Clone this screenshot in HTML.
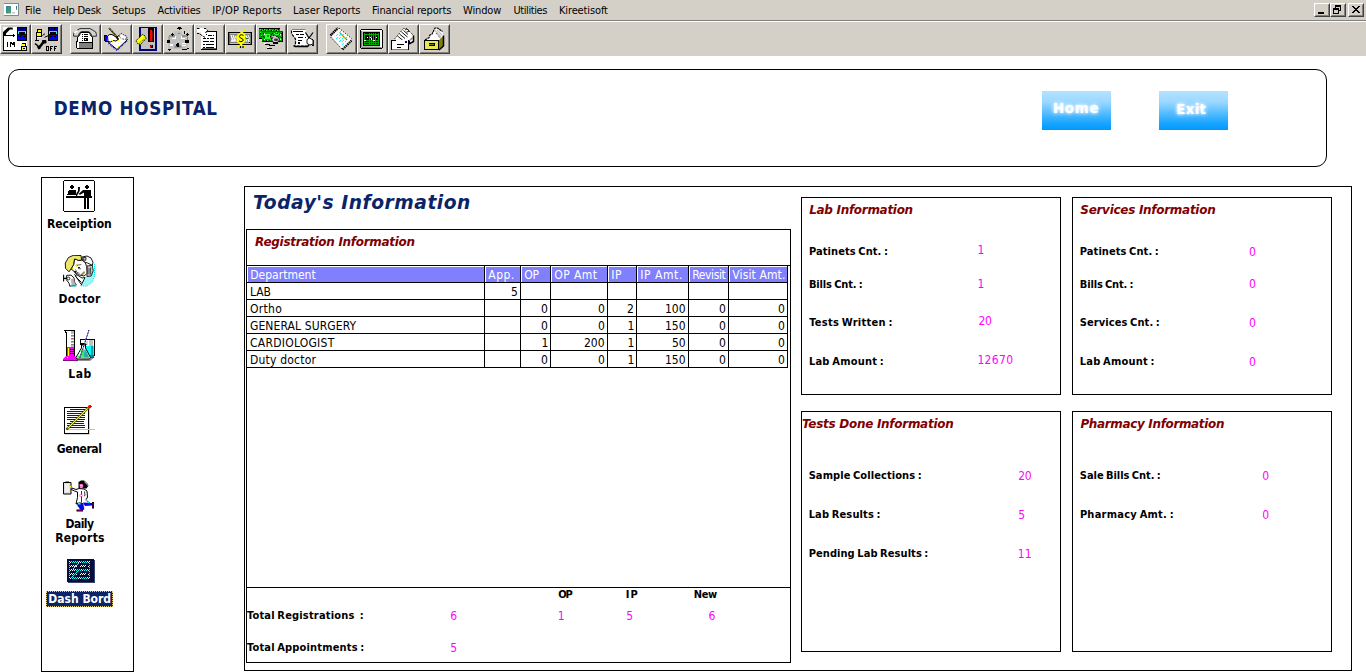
<!DOCTYPE html>
<html lang="en"><head><meta charset="utf-8"><title>DEMO HOSPITAL - Dash Bord</title>
<style>
html,body{margin:0;padding:0;background:#fff;overflow:hidden}
body{width:1366px;height:672px;position:relative;font-family:"DejaVu Sans Condensed","Liberation Sans",sans-serif;font-size:11px}
div,span,svg{position:absolute;box-sizing:border-box}
.t{white-space:pre;line-height:normal}
.bx{border:1px solid #000}
.tb{top:24px;width:31px;height:30px;background:#d4d0c8;border:1px solid;border-color:#fff #404040 #404040 #fff}
.tb:after{content:"";position:absolute;left:0;top:0;right:0;bottom:0;border:1px solid;border-color:#d4d0c8 #808080 #808080 #d4d0c8}
.tb svg{left:2px;top:2px;width:24px;height:24px;z-index:1}
.wb{top:3px;width:16px;height:14px;background:#d4d0c8;border:1px solid;border-color:#fff #404040 #404040 #fff}
.wb:after{content:"";position:absolute;left:0;top:0;right:0;bottom:0;border:1px solid;border-color:#d4d0c8 #808080 #808080 #d4d0c8}
.hl{height:1px;background:#000}
.vl{width:1px;background:#000}
.hc{top:266px;height:16px;background:#8080ff;border-top:1px solid #fff;border-left:1px solid #fff}
.btn{top:91px;width:69px;height:39px;background:linear-gradient(#b4e2ff 0%,#9ad8ff 28%,#52bbff 58%,#1aa5ff 82%,#0099ff 100%)}
</style></head>
<body>
<div id="menubar" style="left:0;top:0;width:1366px;height:56px;background:#d4d0c8">
<div style="left:0;top:20px;width:1366px;height:1px;background:#808080"></div>
<div style="left:0;top:21px;width:1366px;height:1px;background:#fff"></div>
<svg style="left:4px;top:3px" width="15" height="13" viewBox="0 0 15 13"><defs><linearGradient id="ag" x1="0" y1="0" x2="1" y2="1"><stop offset="0" stop-color="#3a78b8"/><stop offset="1" stop-color="#48b050"/></linearGradient><linearGradient id="ag2" x1="0" y1="0" x2="0" y2="1"><stop offset="0" stop-color="#2858b0"/><stop offset="1" stop-color="#50c050"/></linearGradient></defs><rect x="0" y="0" width="15" height="13" fill="#808890"/><rect x="0" y="1" width="14" height="11" fill="#fff"/><rect x="2" y="3" width="5" height="7.500" fill="url(#ag)"/><rect x="12" y="3" width="1" height="4" fill="url(#ag2)"/><rect x="8" y="9" width="3" height="1.500" fill="#c8c8c8"/></svg>
<div class="wb" style="left:1314px"><svg style="left:0;top:0" width="14" height="12" viewBox="0 0 14 12" shape-rendering="crispEdges"><rect x="3" y="8" width="6" height="2" fill="#000"/></svg></div>
<div class="wb" style="left:1330px"><svg style="left:0;top:0" width="14" height="12" viewBox="0 0 14 12" shape-rendering="crispEdges" fill="#000"><rect x="4" y="1" width="6" height="2"/><rect x="9" y="1" width="1" height="6"/><rect x="8" y="6" width="2" height="1"/><rect x="4" y="1" width="1" height="3"/><rect x="2" y="4" width="6" height="2"/><rect x="2" y="4" width="1" height="6"/><rect x="7" y="4" width="1" height="6"/><rect x="2" y="9" width="6" height="1"/></svg></div>
<div class="wb" style="left:1348px"><svg style="left:0;top:0" width="14" height="12" viewBox="0 0 14 12" shape-rendering="crispEdges" fill="#000"><rect x="3" y="2" width="2" height="1"/><rect x="9" y="2" width="2" height="1"/><rect x="4" y="3" width="2" height="1"/><rect x="8" y="3" width="2" height="1"/><rect x="5" y="4" width="2" height="1"/><rect x="7" y="4" width="2" height="1"/><rect x="5" y="6" width="2" height="1"/><rect x="7" y="6" width="2" height="1"/><rect x="4" y="7" width="2" height="1"/><rect x="8" y="7" width="2" height="1"/><rect x="3" y="8" width="2" height="1"/><rect x="9" y="8" width="2" height="1"/><rect x="6" y="5" width="2" height="1"/></svg></div>
<span class="t" style='left:24.96px;top:4px;font:11px "DejaVu Sans Condensed", "Liberation Sans", sans-serif;color:#000;letter-spacing:-0.103px;'>File</span>
<span class="t" style='left:52.86px;top:4px;font:11px "DejaVu Sans Condensed", "Liberation Sans", sans-serif;color:#000;letter-spacing:-0.230px;'>Help Desk</span>
<span class="t" style='left:112.07px;top:4px;font:11px "DejaVu Sans Condensed", "Liberation Sans", sans-serif;color:#000;letter-spacing:-0.076px;'>Setups</span>
<span class="t" style='left:157.52px;top:4px;font:11px "DejaVu Sans Condensed", "Liberation Sans", sans-serif;color:#000;letter-spacing:-0.208px;'>Activities</span>
<span class="t" style='left:212.16px;top:4px;font:11px "DejaVu Sans Condensed", "Liberation Sans", sans-serif;color:#000;letter-spacing:0.203px;'>IP/OP Reports</span>
<span class="t" style='left:293.06px;top:4px;font:11px "DejaVu Sans Condensed", "Liberation Sans", sans-serif;color:#000;letter-spacing:-0.039px;'>Laser Reports</span>
<span class="t" style='left:372.06px;top:4px;font:11px "DejaVu Sans Condensed", "Liberation Sans", sans-serif;color:#000;letter-spacing:-0.151px;'>Financial reports</span>
<span class="t" style='left:463.09px;top:4px;font:11px "DejaVu Sans Condensed", "Liberation Sans", sans-serif;color:#000;letter-spacing:-0.140px;'>Window</span>
<span class="t" style='left:513.38px;top:4px;font:11px "DejaVu Sans Condensed", "Liberation Sans", sans-serif;color:#000;letter-spacing:-0.404px;'>Utilities</span>
<span class="t" style='left:558.96px;top:4px;font:11px "DejaVu Sans Condensed", "Liberation Sans", sans-serif;color:#000;letter-spacing:-0.121px;'>Kireetisoft</span>
<div id="toolbar" style="left:0;top:0">
<div class="tb" style="left:0px"><svg viewBox="0 0 24 24" shape-rendering="crispEdges"><rect x="0" y="0" width="24" height="24" fill="#fff"/><rect x="0" y="5" width="1" height="19" fill="#000"/><rect x="0" y="23" width="19" height="1" fill="#000"/><path d="M0 8V5L5 .5h4.500L10 2.500H7L3 6.500V8z" fill="#000" shape-rendering="auto"/><rect x="1" y="8" width="10" height="1" fill="#000"/><rect x="10" y="7" width="1" height="3" fill="#000"/><rect x="11" y="8" width="1" height="1" fill="#000"/><rect x="14" y="0" width="10" height="14" fill="#000"/><rect x="15" y="1" width="8" height="3" fill="#0000a8"/><rect x="17" y="1" width="1" height="2" fill="#000"/><rect x="20" y="1" width="1" height="2" fill="#000"/><rect x="15" y="4" width="8" height="1" fill="#00ffff"/><rect x="15" y="5" width="1" height="2" fill="#00ffff"/><rect x="22" y="5" width="1" height="2" fill="#00ffff"/><rect x="15" y="8" width="8" height="5" fill="#0000ff"/><rect x="16" y="9" width="2" height="1" fill="#000"/><rect x="20" y="9" width="2" height="1" fill="#000"/><rect x="4" y="15" width="1" height="5" fill="#000"/><rect x="7" y="15" width="1" height="5" fill="#000"/><rect x="8" y="15" width="1" height="2" fill="#000"/><rect x="9" y="16" width="1" height="2" fill="#000"/><rect x="10" y="15" width="1" height="3" fill="#000"/><rect x="11" y="15" width="1" height="5" fill="#000"/><rect x="18" y="19" width="6" height="5" fill="#000"/><rect x="19" y="20" width="4" height="3" fill="#ffff00"/><rect x="20" y="21" width="2" height="1" fill="#000"/><rect x="18" y="17" width="2" height="2" fill="#ffff00"/><rect x="19" y="16" width="4" height="1" fill="#000"/><rect x="22" y="17" width="1" height="2" fill="#000"/><rect x="20" y="17" width="2" height="1" fill="#ffff00"/></svg></div>
<div class="tb" style="left:31px"><svg viewBox="0 0 24 24" shape-rendering="crispEdges"><rect x="14" y="0" width="10" height="14" fill="#000"/><rect x="15" y="1" width="8" height="3" fill="#0000a8"/><rect x="17" y="1" width="1" height="2" fill="#000"/><rect x="20" y="1" width="1" height="2" fill="#000"/><rect x="15" y="4" width="8" height="1" fill="#00ffff"/><rect x="15" y="5" width="1" height="2" fill="#00ffff"/><rect x="22" y="5" width="1" height="2" fill="#00ffff"/><rect x="15" y="8" width="8" height="5" fill="#0000ff"/><rect x="16" y="9" width="2" height="1" fill="#000"/><rect x="20" y="9" width="2" height="1" fill="#000"/><rect x="3" y="2" width="5" height="4" fill="#000"/><rect x="4" y="3" width="3" height="2" fill="#ffff00"/><rect x="2" y="5" width="6" height="5" fill="#000"/><rect x="3" y="6" width="4" height="3" fill="#ffff00"/><rect x="2" y="9" width="1" height="5" fill="#000"/><rect x="1" y="13" width="4" height="1" fill="#000"/><rect x="3" y="10" width="4" height="1" fill="#fff"/><g shape-rendering="auto" stroke="#000" fill="none"><path d="M8.5 8.5l2.5-1.8M10.5 10.3l3.5-1.5" stroke-width="1"/><path d="M4.5 21.5L9.5 15" stroke-width="2.6"/><path d="M8.5 13.5h3.5v2.5h-3z" fill="#000"/><path d="M1 16.5l3 2.5" stroke-width="1.6"/><path d="M4 19l1.5 3" stroke-width="2.4"/></g><rect x="12" y="19" width="1" height="5" fill="#000"/><rect x="14" y="19" width="1" height="5" fill="#000"/><rect x="13" y="19" width="1" height="1" fill="#000"/><rect x="13" y="23" width="1" height="1" fill="#000"/><rect x="16" y="19" width="1" height="5" fill="#000"/><rect x="17" y="19" width="2" height="1" fill="#000"/><rect x="17" y="21" width="1" height="1" fill="#000"/><rect x="20" y="19" width="1" height="5" fill="#000"/><rect x="21" y="19" width="2" height="1" fill="#000"/><rect x="21" y="21" width="1" height="1" fill="#000"/></svg></div>
<div class="tb" style="left:70px"><svg viewBox="0 0 24 24" shape-rendering="crispEdges"><g shape-rendering="auto" stroke="#000" stroke-width="1"><path d="M6.5 8.5L4.5 10v5.5h15V10l-2-1.5-1-3h-9z" fill="#fff"/><path d="M.6 7.5Q.4 4.6 3.5 3.6L7 1.6h10l3.5 2Q23.600 4.600 23.4 7.5v1.700h-5v-1.500Q17.500 5.200 15.500 4.600h-7Q6.500 5.200 5.600 7.700v1.500h-5z" fill="#d4d4d4" stroke-width=".8"/><path d="M1.500 6Q2 4.300 4.500 4" stroke="#fff" stroke-width="1.800" fill="none"/></g><rect x="6" y="16" width="13" height="5" fill="#808080"/><rect x="3" y="14" width="1" height="7" fill="#000"/><rect x="19" y="14" width="1" height="7" fill="#000"/><rect x="4" y="21" width="16" height="1" fill="#000"/><rect x="4" y="15" width="2" height="6" fill="#fff"/><rect x="9" y="7" width="1" height="1" fill="#000"/><rect x="9" y="9" width="1" height="1" fill="#000"/><rect x="9" y="11" width="1" height="1" fill="#000"/><rect x="9" y="13" width="1" height="1" fill="#000"/><rect x="11" y="7" width="4" height="1" fill="#000"/><rect x="11" y="9" width="4" height="1" fill="#000"/><rect x="11" y="11" width="4" height="3" fill="#000"/><rect x="12" y="12" width="1" height="1" fill="#fff"/></svg></div>
<div class="tb" style="left:101px"><svg viewBox="0 0 24 24" shape-rendering="crispEdges"><g shape-rendering="auto"><path d="M4.5 15.500L16 8l7.500 4.500L13 22.500z" fill="#fff" stroke="#000" stroke-width="1"/><path d="M4.500 16.500L13 23.500 23.500 13.500" fill="none" stroke="#0000ff" stroke-width="1.200" stroke-dasharray="1 1"/><path d="M3.500 9Q5 7 8 7.500l4 2.500 2 2.500-2 1.500-3-.5-2.500 1.500L4 14.500z" fill="#fff" stroke="#000" stroke-width="1"/><path d="M15 8.500l2-2 2 .5 1 1.500 2.500.5 .5 2-2 1.500-4-1z" fill="#fff" stroke="#000" stroke-width=".8" stroke-dasharray="1.500 1"/><path d="M5 1l8.500 9.500" stroke="#000" stroke-width="1.500"/><path d="M5.500 1.500l8 9" stroke="#ffff00" stroke-width=".9" stroke-dasharray="1.200 1"/><path d="M13 10.500l1.500 2" stroke="#000" stroke-width="1.500"/></g><rect x="1" y="9" width="2" height="5" fill="#0000ff"/><rect x="0" y="8" width="1" height="6" fill="#000"/><rect x="1" y="8" width="2" height="1" fill="#000"/><rect x="1" y="14" width="3" height="1" fill="#000"/><rect x="14" y="12" width="1" height="1" fill="#ff0000"/><rect x="8" y="13" width="1" height="1" fill="#ffff00"/><rect x="11" y="15" width="1" height="1" fill="#ffff00"/><rect x="14" y="13" width="1" height="1" fill="#ffff00"/><rect x="17" y="15" width="1" height="1" fill="#ffff00"/><rect x="20" y="12" width="1" height="1" fill="#ffff00"/><rect x="8" y="16" width="1" height="1" fill="#ffff00"/><rect x="11" y="18" width="1" height="1" fill="#ffff00"/><rect x="14" y="16" width="1" height="1" fill="#ffff00"/><rect x="14" y="19" width="1" height="1" fill="#ffff00"/><rect x="17" y="11" width="1" height="1" fill="#ffff00"/></svg></div>
<div class="tb" style="left:132px"><svg viewBox="0 0 24 24" shape-rendering="crispEdges"><rect x="4" y="0" width="18" height="24" fill="#000080"/><rect x="6" y="1" width="14" height="21" fill="#c0c0c0"/><rect x="13" y="1" width="6" height="14" fill="#000"/><rect x="15" y="3" width="2" height="11" fill="#ff0000"/><rect x="17" y="4" width="1" height="10" fill="#800000"/><rect x="15" y="18" width="3" height="3" fill="#000"/><rect x="15" y="19" width="1" height="2" fill="#ff0000"/><rect x="16" y="18" width="1" height="1" fill="#ff0000"/><g shape-rendering="auto"><path d="M.7 14L7.500 7.500l1.500 .5 1.200 2 1.300 1L5 18l-1.800-.8-.8-1.700z" fill="#ffff00" stroke="#000" stroke-width="1" stroke-dasharray="1.400 .8"/><path d="M4 16.500l7-6" stroke="#808000" stroke-width="1.400" stroke-dasharray="1 1"/></g></svg></div>
<div class="tb" style="left:163px"><svg viewBox="0 0 24 24" shape-rendering="crispEdges"><g shape-rendering="auto"><path d="M9 4h6l2 5 5 4v9H2v-9l4-4z" fill="#c0c0c0"/><path d="M3 9h6M16 9h5" stroke="#808080" stroke-width="1.500"/><path d="M3 9.500v4M21.500 9.500v4" stroke="#808080"/><path d="M8 20.500h8l-2-2.500h-4z" fill="#808080"/></g><rect x="12" y="0" width="3" height="1" fill="#000"/><rect x="13" y="0" width="1" height="3" fill="#000"/><rect x="11" y="1" width="5" height="1" fill="#000"/><rect x="6" y="6" width="1" height="3" fill="#000"/><rect x="5" y="7" width="3" height="1" fill="#000"/><rect x="21" y="6" width="1" height="3" fill="#000"/><rect x="20" y="7" width="3" height="1" fill="#000"/><rect x="18" y="4" width="1" height="3" fill="#000"/><rect x="1" y="13" width="3" height="3" fill="#000"/><rect x="19" y="13" width="4" height="3" fill="#000"/><rect x="11" y="16" width="2" height="4" fill="#000"/><rect x="10" y="17" width="1" height="2" fill="#000"/><rect x="6" y="11" width="4" height="1" fill="#fff"/><rect x="9" y="9" width="1" height="2" fill="#fff"/><rect x="15" y="9" width="1" height="2" fill="#fff"/><rect x="15" y="11" width="4" height="1" fill="#fff"/><rect x="4" y="17" width="3" height="2" fill="#fff"/><rect x="16" y="16" width="4" height="1" fill="#fff"/><rect x="16" y="18" width="4" height="1" fill="#fff"/><rect x="12" y="6" width="2" height="1" fill="#808080"/><rect x="2" y="22" width="3" height="1" fill="#000"/><rect x="3" y="23" width="1" height="1" fill="#000"/><rect x="16" y="22" width="5" height="1" fill="#000"/><rect x="21" y="21" width="2" height="1" fill="#000"/></svg></div>
<div class="tb" style="left:194px"><svg viewBox="0 0 24 24" shape-rendering="crispEdges"><rect x="4" y="4" width="16" height="19" fill="#fff"/><rect x="4" y="4" width="16" height="1" fill="#000"/><rect x="19" y="4" width="1" height="19" fill="#000"/><rect x="4" y="22" width="16" height="1" fill="#000"/><rect x="5" y="21" width="14" height="1" fill="#606060"/><g shape-rendering="auto"><path d="M0 1h9l2.500 3-2.500.5-1 1.500 2 3L4 5.500H0z" fill="#fff"/><path d="M0 1.500h3M7 1.500h2L11.500 4.500 9 5 8 6.500M0 6.500h2l3 2 3 2" stroke="#000" stroke-width="1" fill="none" stroke-dasharray="2.500 1"/></g><rect x="9" y="7" width="1" height="1" fill="#000"/><rect x="11" y="8" width="4" height="1" fill="#000"/><rect x="16" y="8" width="1" height="1" fill="#000"/><rect x="6" y="11" width="3" height="1" fill="#000"/><rect x="10" y="11" width="2" height="1" fill="#000"/><rect x="13" y="11" width="4" height="1" fill="#000"/><rect x="6" y="14" width="6" height="1" fill="#000"/><rect x="13" y="14" width="4" height="1" fill="#000"/><rect x="6" y="17" width="2" height="1" fill="#000"/><rect x="9" y="17" width="8" height="1" fill="#000"/><rect x="6" y="20" width="2" height="1" fill="#000"/><rect x="9" y="20" width="8" height="1" fill="#000"/></svg></div>
<div class="tb" style="left:225px"><svg viewBox="0 0 24 24" shape-rendering="crispEdges"><rect x="0" y="5" width="24" height="13" fill="#000"/><rect x="1" y="6" width="22" height="11" fill="#808080"/><rect x="1" y="7" width="1" height="9" fill="#00a000"/><rect x="2" y="6" width="20" height="1" fill="#c0c0c0"/><rect x="2" y="16" width="20" height="1" fill="#c0c0c0"/><g shape-rendering="auto"><path d="M3 8l1.500 3.500L3 15M5 8l1.500 3.500L5 15M7 8.500l1 3-1 3M3 8l2 7M5 8l2 7M18 8.500l1.500 3-1.500 3.500M20 8l1.500 3.500-1.500 3.500M18 8.500l3.500 6.500" stroke="#fff" stroke-width="1" fill="none"/><path d="M13.500 3.500l1 1.500 2 1.500 1.500 2.500-1 2 1 2-1.500 2.500-2 1-.5 2.500h-2l-.5-2.500-2-1L8 14.500l1-2.500-1-2.500 1.500-2 2.500-1.500z" fill="#ffff00"/><path d="M15.500 8.500Q13.500 7 12 8.200T12.500 11l2 .8Q16 13 14.500 14.200T11 14" stroke="#000" stroke-width="1" fill="none"/><path d="M12.500 19v2M15 19v2" stroke="#000" stroke-width="1.200"/></g><rect x="18" y="11" width="2" height="1" fill="#008000"/><rect x="21" y="15" width="1" height="1" fill="#000"/><rect x="11" y="3" width="1" height="1" fill="#ffff00"/><rect x="16" y="3" width="1" height="1" fill="#ffff00"/><rect x="10" y="19" width="1" height="1" fill="#ffff00"/><rect x="16" y="19" width="1" height="1" fill="#ffff00"/></svg></div>
<div class="tb" style="left:256px"><svg viewBox="0 0 24 24" shape-rendering="crispEdges"><rect x="0" y="1" width="21" height="11" fill="#00a800"/><rect x="0" y="1" width="21" height="1" fill="#000"/><rect x="0" y="11" width="3" height="1" fill="#000"/><rect x="3" y="4" width="21" height="11" fill="#00a800"/><rect x="3" y="14" width="21" height="1" fill="#000"/><rect x="23" y="4" width="1" height="11" fill="#000"/><rect x="3" y="4" width="21" height="1" fill="#006000"/><rect x="1" y="2" width="1" height="1" fill="#30ff30"/><rect x="3" y="3" width="1" height="1" fill="#30ff30"/><rect x="5" y="2" width="1" height="1" fill="#30ff30"/><rect x="7" y="3" width="1" height="1" fill="#30ff30"/><rect x="10" y="2" width="1" height="1" fill="#30ff30"/><rect x="13" y="3" width="1" height="1" fill="#30ff30"/><rect x="16" y="2" width="1" height="1" fill="#30ff30"/><rect x="18" y="3" width="1" height="1" fill="#30ff30"/><rect x="1" y="5" width="1" height="1" fill="#30ff30"/><rect x="2" y="8" width="1" height="1" fill="#30ff30"/><rect x="5" y="6" width="1" height="1" fill="#30ff30"/><rect x="15" y="6" width="1" height="1" fill="#30ff30"/><rect x="17" y="5" width="1" height="1" fill="#30ff30"/><rect x="19" y="6" width="1" height="1" fill="#30ff30"/><rect x="21" y="8" width="1" height="1" fill="#30ff30"/><rect x="21" y="11" width="1" height="1" fill="#30ff30"/><rect x="18" y="12" width="1" height="1" fill="#30ff30"/><rect x="5" y="12" width="1" height="1" fill="#30ff30"/><rect x="8" y="13" width="1" height="1" fill="#30ff30"/><rect x="11" y="12" width="1" height="1" fill="#30ff30"/><rect x="6" y="7" width="5" height="5" fill="#30ff30"/><rect x="8" y="8" width="2" height="2" fill="#00a800"/><rect x="16" y="7" width="4" height="1" fill="#30ff30"/><rect x="5" y="7" width="1" height="1" fill="#fff"/><rect x="5" y="12" width="1" height="1" fill="#fff"/><rect x="21" y="7" width="1" height="1" fill="#fff"/><rect x="21" y="12" width="1" height="1" fill="#fff"/><g shape-rendering="auto"><ellipse cx="16.500" cy="12.500" rx="3.800" ry="3.300" fill="#c8c8c8" stroke="#000" stroke-width=".8"/><ellipse cx="17" cy="12.800" rx="2" ry="1.300" fill="#303030"/><path d="M13 9.500h4" stroke="#c0c0c0" stroke-width="1.500"/></g><rect x="2" y="3" width="1" height="1" fill="#000"/><rect x="4" y="2" width="1" height="1" fill="#000"/><rect x="6" y="3" width="1" height="1" fill="#000"/><rect x="9" y="2" width="1" height="1" fill="#000"/><rect x="12" y="3" width="1" height="1" fill="#000"/><rect x="15" y="2" width="1" height="1" fill="#000"/><rect x="17" y="3" width="1" height="1" fill="#000"/><rect x="19" y="2" width="1" height="1" fill="#000"/><rect x="1" y="6" width="1" height="1" fill="#000"/><rect x="2" y="9" width="1" height="1" fill="#000"/><rect x="4" y="6" width="1" height="1" fill="#000"/><rect x="4" y="9" width="1" height="1" fill="#000"/><rect x="13" y="6" width="1" height="1" fill="#000"/><rect x="14" y="8" width="1" height="1" fill="#000"/><rect x="18" y="6" width="1" height="1" fill="#000"/><rect x="20" y="7" width="1" height="1" fill="#000"/><rect x="22" y="6" width="1" height="1" fill="#000"/><rect x="22" y="10" width="1" height="1" fill="#000"/><rect x="4" y="13" width="1" height="1" fill="#000"/><rect x="7" y="13" width="1" height="1" fill="#000"/><rect x="10" y="13" width="1" height="1" fill="#000"/><rect x="12" y="7" width="1" height="1" fill="#000"/><rect x="11" y="9" width="1" height="1" fill="#000"/><rect x="5" y="10" width="1" height="1" fill="#000"/><rect x="12" y="11" width="1" height="1" fill="#000"/><rect x="5" y="16" width="5" height="1" fill="#c0c0c0"/><rect x="6" y="17" width="5" height="1" fill="#000"/><rect x="11" y="17" width="5" height="1" fill="#c0c0c0"/><rect x="10" y="18" width="6" height="1" fill="#000"/><rect x="7" y="20" width="5" height="1" fill="#c0c0c0"/><rect x="8" y="21" width="5" height="1" fill="#000"/><rect x="5" y="16" width="2" height="1" fill="#fff"/><rect x="8" y="20" width="2" height="1" fill="#fff"/><rect x="14" y="15" width="5" height="2" fill="#000"/></svg></div>
<div class="tb" style="left:287px"><svg viewBox="0 0 24 24" shape-rendering="crispEdges"><g shape-rendering="auto"><path d="M1.500 3Q2 2 4 2.500h11l1 1-1 2 5 9-3 5H6l-1-1.500 1-1.500V12L1.500 6z" fill="#fff"/><path d="M1.500 3.500v3L5.500 12v4.500L4 19h13.500" stroke="#000" stroke-width="1.200" fill="none" stroke-dasharray="3 1"/><path d="M2 2.500h13.500" stroke="#808080"/><path d="M15.500 5.500L19 11l4-5.500" stroke="#000" stroke-width="1.200" fill="none"/><path d="M17 12.500l2.500-1.500 3.500 2v4l-3 1-3-1.500z" fill="#fff" stroke="#000" stroke-width=".9"/><path d="M4.500 19.500h13l1.500-1.500" stroke="#000" stroke-width="1.600" fill="none"/></g><rect x="3" y="4" width="10" height="1" fill="#000"/><rect x="6" y="7" width="3" height="1" fill="#000"/><rect x="10" y="7" width="4" height="1" fill="#000"/><rect x="8" y="10" width="5" height="1" fill="#000"/><rect x="15" y="10" width="1" height="1" fill="#000"/><rect x="8" y="13" width="4" height="1" fill="#000"/><rect x="8" y="15" width="2" height="2" fill="#000"/><rect x="23" y="13" width="1" height="5" fill="#0000ff"/><rect x="22" y="12" width="1" height="1" fill="#000"/><rect x="22" y="18" width="2" height="1" fill="#000"/></svg></div>
<div class="tb" style="left:326px"><svg viewBox="0 0 24 24" shape-rendering="crispEdges"><g shape-rendering="auto"><path d="M1.500 8L9 .8 22.500 11.500 13 22.500z" fill="#fff"/><path d="M1.500 8.500L9 1" stroke="#000" stroke-width="2.400" fill="none" stroke-dasharray="1.500 .5"/><path d="M10 1l12.500 10.500M1.500 10L13 22" stroke="#000" stroke-width="1" fill="none" stroke-dasharray="1 1.600"/><path d="M13.500 22.500l9-9" stroke="#000" stroke-width="2.200" fill="none" stroke-dasharray="1.500 .8"/><path d="M14.500 21l7.500-7.500" stroke="#808080" stroke-width="1" stroke-dasharray="1 1.500"/><path d="M10.500 5.500L18 13" stroke="#808080" stroke-width="1.200"/><path d="M10 6l7 7" stroke="#ffff00" stroke-width="1.200" stroke-dasharray="1.200 1"/></g><rect x="17" y="12" width="1" height="1" fill="#00a800"/><rect x="11" y="4" width="1" height="1" fill="#00ffff"/><rect x="8" y="7" width="1" height="1" fill="#00ffff"/><rect x="7" y="8" width="1" height="1" fill="#00ffff"/><rect x="11" y="7" width="1" height="1" fill="#00ffff"/><rect x="10" y="8" width="1" height="1" fill="#00ffff"/><rect x="14" y="7" width="1" height="1" fill="#00ffff"/><rect x="8" y="10" width="1" height="1" fill="#00ffff"/><rect x="7" y="11" width="1" height="1" fill="#00ffff"/><rect x="11" y="10" width="1" height="1" fill="#00ffff"/><rect x="10" y="11" width="1" height="1" fill="#00ffff"/><rect x="14" y="10" width="1" height="1" fill="#00ffff"/><rect x="13" y="11" width="1" height="1" fill="#00ffff"/><rect x="17" y="10" width="1" height="1" fill="#00ffff"/><rect x="11" y="13" width="1" height="1" fill="#00ffff"/><rect x="10" y="14" width="1" height="1" fill="#00ffff"/><rect x="14" y="13" width="1" height="1" fill="#00ffff"/><rect x="13" y="14" width="1" height="1" fill="#00ffff"/><rect x="16" y="14" width="1" height="1" fill="#00ffff"/><rect x="14" y="16" width="1" height="1" fill="#00ffff"/><rect x="13" y="17" width="1" height="1" fill="#00ffff"/></svg></div>
<div class="tb" style="left:357px"><svg viewBox="0 0 24 24" shape-rendering="crispEdges"><rect x="1" y="2" width="21" height="1" fill="#000"/><rect x="0" y="3" width="1" height="18" fill="#000"/><rect x="22" y="3" width="1" height="18" fill="#000"/><rect x="1" y="21" width="21" height="1" fill="#000"/><rect x="1" y="3" width="21" height="18" fill="#c0c0c0"/><rect x="1" y="3" width="21" height="1" fill="#fff"/><rect x="20" y="4" width="2" height="16" fill="#fff"/><rect x="1" y="4" width="1" height="16" fill="#808080"/><rect x="2" y="20" width="19" height="1" fill="#808080"/><rect x="3" y="5" width="17" height="14" fill="#000"/><rect x="4" y="6" width="1" height="12" fill="#00a800"/><rect x="9" y="6" width="1" height="12" fill="#00a800"/><rect x="11" y="6" width="1" height="12" fill="#00a800"/><rect x="13" y="6" width="1" height="12" fill="#00a800"/><rect x="15" y="6" width="1" height="12" fill="#00a800"/><rect x="18" y="6" width="1" height="12" fill="#00a800"/><rect x="4" y="7" width="15" height="1" fill="#00a800"/><rect x="4" y="13" width="15" height="1" fill="#00a800"/><rect x="4" y="15" width="15" height="1" fill="#00a800"/><rect x="4" y="17" width="15" height="1" fill="#00a800"/><rect x="7" y="10" width="1" height="1" fill="#fff"/><rect x="16" y="10" width="1" height="1" fill="#fff"/><rect x="4" y="13" width="2" height="1" fill="#fff"/><rect x="13" y="13" width="2" height="1" fill="#fff"/><rect x="10" y="10" width="1" height="1" fill="#fff"/><rect x="11" y="11" width="1" height="2" fill="#fff"/></svg></div>
<div class="tb" style="left:388px"><svg viewBox="0 0 24 24" shape-rendering="crispEdges"><g shape-rendering="auto"><path d="M3.500 12.500L12.500 1.500l3 .5 7 7-1 7-4 2.500V13z" fill="#fff"/><path d="M3.500 12L12.500 1.500h3L22.500 8.500" stroke="#000" stroke-width="1" fill="none" stroke-dasharray="1 1.300"/><path d="M6.500 9l5 4M8.500 7l5.500 4.500M10.500 5l6 5M12.500 3.500l4.500 4M14 3q2-2 3.500 0t-2 2" stroke="#000" stroke-width=".9" fill="none"/><path d="M22.500 8.500v6L18 17" stroke="#000" stroke-width="1.500" fill="none"/><path d="M18 14l4-3.500" stroke="#808080" stroke-width="1.200"/></g><rect x="0" y="13" width="18" height="10" fill="#fff"/><rect x="0" y="13" width="1" height="10" fill="#000"/><rect x="0" y="13" width="5" height="1" fill="#000"/><rect x="17" y="13" width="1" height="10" fill="#000"/><rect x="1" y="22" width="16" height="1" fill="#808080"/><rect x="14" y="14" width="2" height="2" fill="#000080"/><rect x="6" y="17" width="7" height="1" fill="#000"/><rect x="6" y="20" width="4" height="1" fill="#000"/><rect x="17" y="14" width="2" height="2" fill="#000"/></svg></div>
<div class="tb" style="left:419px"><svg viewBox="0 0 24 24" shape-rendering="crispEdges"><g shape-rendering="auto"><path d="M3 13.500L11 4l1.500-3 3-.5 5 3.500.5 5-4 5z" fill="#fff"/><path d="M3 13L7 10.500 8 8l2-1 1.500-3 1.500-3h2.500l5 3.500" stroke="#000" stroke-width="1.200" fill="none" stroke-dasharray="2.500 .5"/><path d="M13 3.500l6 6.500M15 3l5 5" stroke="#c0c0c0" stroke-width="1.200"/><path d="M14 6l5 6" stroke="#000" stroke-width=".8" stroke-dasharray="1 1"/><path d="M16.500 14l4.500-5v10l-4.500 4z" fill="#808000"/><path d="M21.500 8.500v10.500L17 23" stroke="#000" stroke-width="1.500" fill="none"/></g><rect x="2" y="13" width="15" height="10" fill="#000"/><rect x="3" y="14" width="13" height="8" fill="#e6e654"/><rect x="7" y="16" width="6" height="3" fill="#000"/><rect x="7" y="17" width="5" height="1" fill="#808000"/></svg></div>
</div></div>
<div id="header" style="left:0;top:0">
<div class="bx" style="left:8px;top:69px;width:1319px;height:98px;border-radius:11px"></div>
<div class="btn" style="left:1042px"></div><div class="btn" style="left:1159px"></div>
<span class="t" style='left:53.71px;top:98px;font:bold 18.67px "DejaVu Sans Condensed", "Liberation Sans", sans-serif;color:#0a246a;letter-spacing:0.710px;'>DEMO HOSPITAL</span>
<span class="t" style='left:1052.92px;top:101px;font:bold 13.33px "DejaVu Sans", "Liberation Sans", sans-serif;color:#fff;letter-spacing:0.805px;text-shadow:0 0 3px #fff,0 0 5px rgba(255,255,255,.8);'>Home</span>
<span class="t" style='left:1176.32px;top:102px;font:bold 13.33px "DejaVu Sans", "Liberation Sans", sans-serif;color:#fff;letter-spacing:0.346px;text-shadow:0 0 3px #fff,0 0 5px rgba(255,255,255,.8);'>Exit</span>
</div>
<div id="sidebar" style="left:0;top:0">
<div class="bx" style="left:41px;top:177px;width:93px;height:495px"></div>
<svg style="left:63px;top:180px" width="32" height="32" viewBox="0 0 32 32" shape-rendering="crispEdges"><path d="M1.500 .5h29l1 1v29l-1 1h-29l-1-1v-29z" fill="#fff" stroke="#000" stroke-width="1"/><rect x="8" y="5" width="2" height="4" fill="#000"/><rect x="7" y="6" width="4" height="2" fill="#000"/><rect x="23" y="5" width="2" height="4" fill="#000"/><rect x="22" y="6" width="4" height="2" fill="#000"/><rect x="6" y="10" width="7" height="1" fill="#000"/><rect x="5" y="11" width="8" height="3" fill="#000"/><rect x="4" y="14" width="9" height="1" fill="#000"/><rect x="3" y="16" width="26" height="2" fill="#000"/><rect x="21" y="10" width="7" height="6" fill="#000"/><rect x="21" y="18" width="2" height="11" fill="#000"/><rect x="24" y="18" width="2" height="11" fill="#000"/><rect x="13" y="14" width="1" height="2" fill="#000"/><g shape-rendering="auto"><path d="M22 10h-2l-4.500 4 1.500 .8 5-2.800z" fill="#000"/><path d="M15 7h2l-.3 4-2 3.500-.7 1.500h-1l.5-3 1.500-2z" fill="#000"/></g></svg>
<svg style="left:63px;top:255px" width="32" height="32" viewBox="0 0 32 32"><g shape-rendering="auto" stroke-linejoin="round"><path d="M31.700 8.500V21L29.300 27 24 31H18l1.800-4 2.400-4.200 2-1.200 4-.6 2-5.300z" fill="#9af6f6"/><path d="M31.500 9v12L29 27.500 24 31.200h-5.500" stroke="#00e8e8" stroke-width="1" fill="none" stroke-dasharray="1 1"/><path d="M19 2L24 1l4 2 2 4.300-.7 3L24.600 8 22 7.300 19.200 5z" fill="#fff" stroke="#000" stroke-width=".9"/><path d="M20.200 2.500h2.800v2.700h-2.800z" fill="#b8b8b8" stroke="#000" stroke-width=".7"/><path d="M24 11l5.300-.7 .9 5.400-2 5.300-4.200.6z" fill="#c4c4c4" stroke="#000" stroke-width=".8"/><path d="M27.500 12.500v7M26 13v6.500" stroke="#000" stroke-width=".6"/><path d="M11.500 4l2 .5 2.200 1 2.900-.5L22 7.300l1.700 4.200L24 18.600 21 21l-5.300-1.200L11 16.300 8 13.900l2.600-4.200z" fill="#fff" stroke="#000" stroke-width=".9"/><path d="M10.300 .3L18 .5l.6 4.500-2.900.5-2.200-1-2-.5-.9 5.700L8 13.900 6 16.800 2.500 13.300 2.300 8 5.500 2.500z" fill="#ece66a" stroke="#000" stroke-width=".9"/><path d="M12.400 10.600l2.200-1.500M12.800 11.800l1.800-1.300M8.800 14l1.200-.8" stroke="#e0d400" stroke-width="1" fill="none"/><path d="M14 10.300l4.300-.8M15 13.500l3 .3M12.500 14.500l1.500 3 2.500 .8" stroke="#000" stroke-width=".6" fill="none"/><path d="M18.300 19.400L21 16.600l.4 1.400-2 2z" fill="#f0e400" stroke="#000" stroke-width=".5"/><path d="M11.500 19.200L18 29.300M11 16.300l2.500 3.200 5.500 3.500 3-.5-4 8M13.500 19.500l-1 2 6 6" stroke="#000" stroke-width=".9" fill="none"/><path d="M3.700 20.400L8 20.100l3 2.700 .5 4.200 1.800 3-6.600 1.200-.6-3-2.900-3.600z" fill="#fff" stroke="#000" stroke-width=".9"/><path d="M8 24l2.800-.5 .7 3.500 1.500 2.800-4.500 .8z" fill="#b4b4b4"/><path d="M.6 19.800v6.600M.8 23.400h3" stroke="#000" stroke-width="1.100"/><circle cx="5.400" cy="23.500" r="1.400" fill="#fff" stroke="#000" stroke-width=".8"/><path d="M8 31h5.300" stroke="#00d0d0" stroke-width="1.300"/></g><rect x="15" y="12" width="2" height="1" fill="#0000ff"/><rect x="11" y="16" width="2" height="1" fill="#0000ff"/></svg>
<svg style="left:63px;top:330px" width="32" height="32" viewBox="0 0 32 32" shape-rendering="crispEdges"><g shape-rendering="auto"><path d="M4 29.500l13 1.500h10l5-4-8 2z" fill="#909090"/></g><rect x="1" y="0" width="11" height="1" fill="#000"/><rect x="3" y="1" width="8" height="26" fill="#fff"/><rect x="2" y="1" width="1" height="2" fill="#000"/><rect x="3" y="2" width="1" height="24" fill="#000"/><rect x="11" y="1" width="1" height="26" fill="#000"/><rect x="8" y="1" width="3" height="16" fill="#b8b8b8"/><rect x="7" y="4" width="4" height="1" fill="#fff"/><rect x="7" y="7" width="4" height="1" fill="#fff"/><rect x="7" y="10" width="4" height="1" fill="#fff"/><rect x="7" y="13" width="4" height="1" fill="#fff"/><rect x="4" y="17" width="7" height="9" fill="#ff00ff"/><rect x="5" y="18" width="1" height="8" fill="#ffff00"/><rect x="7" y="19" width="4" height="1" fill="#000"/><rect x="7" y="21" width="4" height="1" fill="#000"/><rect x="7" y="23" width="4" height="1" fill="#000"/><rect x="8" y="5" width="3" height="1" fill="#808080"/><rect x="8" y="8" width="3" height="1" fill="#808080"/><rect x="8" y="11" width="3" height="1" fill="#808080"/><rect x="8" y="14" width="3" height="1" fill="#808080"/><path d="M3 26h9l3 3v1H0v-1z" fill="#ff00ff" shape-rendering="auto"/><rect x="0" y="30" width="15" height="1" fill="#800080"/><rect x="4" y="27" width="1" height="1" fill="#ffff00"/><rect x="17" y="9" width="15" height="1" fill="#000"/><rect x="18" y="10" width="13" height="17" fill="#fff"/><rect x="17" y="10" width="1" height="5" fill="#000"/><rect x="31" y="10" width="1" height="16" fill="#000"/><rect x="26" y="10" width="4" height="6" fill="#c0c0c0"/><rect x="23" y="11" width="2" height="4" fill="#d8d8d8"/><rect x="22" y="16" width="9" height="10" fill="#00ffff"/><rect x="28" y="16" width="2" height="10" fill="#00a8a8"/><rect x="24" y="25" width="7" height="2" fill="#008888"/><rect x="24" y="27" width="7" height="1" fill="#006060"/><g shape-rendering="auto"><path d="M17.500 13.500h5M17 14.500h6.500M18.500 15v3L13 27.500l1 1.500h12.500l1-1.500L22.500 18v-3z" fill="#fff" stroke="#000" stroke-width="1"/><path d="M18 19.500L14 27.800h6.500l1-8.300z" fill="#30f060"/><path d="M21.500 19.500l-1 8.300h6L22.500 19.500z" fill="#20b0a0"/><path d="M15.500 26l2.500-4.500" stroke="#fff" stroke-width="1.300"/><path d="M26 0L16.500 29" stroke="#808080" stroke-width="1"/><path d="M26 0L16.500 29" stroke="#0000c0" stroke-width="1" stroke-dasharray="1.200 1.600"/></g></svg>
<svg style="left:63px;top:405px" width="32" height="32" viewBox="0 0 32 32" shape-rendering="crispEdges"><rect x="2" y="3" width="25" height="27" fill="#d8d8d8"/><rect x="1" y="2" width="25" height="27" fill="#000"/><rect x="2" y="3" width="23" height="25" fill="#fff"/><rect x="7" y="4" width="15" height="1" fill="#0000ff"/><rect x="4" y="6" width="18" height="1" fill="#0000ff"/><rect x="4" y="8" width="18" height="1" fill="#0000ff"/><rect x="4" y="10" width="18" height="1" fill="#0000ff"/><rect x="4" y="12" width="18" height="1" fill="#0000ff"/><rect x="4" y="14" width="18" height="1" fill="#0000ff"/><rect x="7" y="16" width="14" height="1" fill="#0000ff"/><rect x="4" y="18" width="17" height="1" fill="#0000ff"/><rect x="4" y="20" width="18" height="1" fill="#0000ff"/><rect x="7" y="22" width="15" height="1" fill="#0000ff"/><rect x="4" y="24" width="28" height="1" fill="#c0c0c0"/><g shape-rendering="auto"><path d="M3.500 24.500L25.500 2.500" stroke="#000" stroke-width="2.300"/><path d="M4.500 23.500L25 3" stroke="#ffff00" stroke-width="1.200"/><path d="M3.300 24.700l1.500-1.500" stroke="#808000" stroke-width="1.600"/><path d="M24.500 3.500l1.500-1.500" stroke="#808000" stroke-width="1.800"/><path d="M25 1.500L27 0l1.500 1.500L27 3.200z" fill="#ff0000" stroke="#ff0000" stroke-width="1"/></g></svg>
<svg style="left:63px;top:480px" width="32" height="32" viewBox="0 0 32 32"><g shape-rendering="auto"><path d="M.5 2.500h7.500v11.500H.5z" fill="#e0e0e0" stroke="#000" stroke-width="1"/><path d="M2.500 1.500h3.500v1.500H2.500z" fill="#000"/><path d="M2 5h4.500M2 7h4M2 9h4.500M2 11h4" stroke="#fff" stroke-width="1"/><path d="M15.500 8V2L18 .5h3l3 2.500 1.500 2.500-2 3-2.500 0z" fill="#000"/><path d="M22 2l3 4M21 1.500l3.500 3" stroke="#fff" stroke-width=".5"/><path d="M16.500 4h3l1 2-1.500 3h-2z" fill="#ff70d0"/><path d="M17.500 5.500h1.500M18 8h1" stroke="#ffff00" stroke-width="1"/><path d="M9 8l4 1.500 3-1 5 .5 3 2 .5 6-1.500 3 3.500 3-6 1-4-1-3.500 1 1.500-6.500v-5.500L11.500 11 8.500 9.500z" fill="#fff" stroke="#000" stroke-width="1"/><path d="M18.500 11v11.500M21.500 11.500l.5 4-1 .5" stroke="#000" stroke-width=".8" fill="none"/><path d="M22 19l2.500 2.500" stroke="#c0c0c0" stroke-width="1.500"/><path d="M16.500 14.500h3v2h-3z" fill="#ff50c8"/><path d="M17 15.500h2" stroke="#ffff00"/><path d="M6.500 5l1.500 .5 1 2.500-1.500 .5z" fill="#ff50c8"/><path d="M7.500 6v1.500" stroke="#ffff00"/><path d="M14 23l5 0 1.500 3 .5 3.500h-3.500L15 26z" fill="#0000ff" stroke="#000" stroke-width=".5"/><path d="M15 23.500l2.500 .5" stroke="#00ffff" stroke-width="1.300"/><path d="M20 22.500l9 .5v2.500l-7 .5z" fill="#0000ff"/><path d="M24 22.500h2" stroke="#00ffff" stroke-width="1.200"/><path d="M13.500 30.500h6.500" stroke="#000" stroke-width="2"/><path d="M15 30.300h4.500" stroke="#800080" stroke-width="1"/><path d="M29 22h2v6.500h-2z" fill="#000"/><path d="M30 23v4.500" stroke="#800080" stroke-width="1"/></g></svg>
<svg style="left:67px;top:559px" width="28" height="24" viewBox="0 0 28 24" shape-rendering="crispEdges"><rect x="0" y="0" width="27" height="23" fill="#050f3c"/><rect x="27" y="1" width="1" height="23" fill="#3a4270"/><rect x="1" y="23" width="27" height="1" fill="#3a4270"/><rect x="2" y="2" width="1" height="1" fill="#fff"/><rect x="3" y="3" width="1" height="1" fill="#fff"/><rect x="4" y="2" width="1" height="1" fill="#fff"/><rect x="5" y="3" width="1" height="1" fill="#fff"/><rect x="6" y="2" width="1" height="1" fill="#fff"/><rect x="7" y="3" width="1" height="1" fill="#fff"/><rect x="8" y="2" width="1" height="1" fill="#fff"/><rect x="9" y="3" width="1" height="1" fill="#fff"/><rect x="10" y="2" width="1" height="1" fill="#fff"/><rect x="11" y="3" width="1" height="1" fill="#fff"/><rect x="12" y="2" width="1" height="1" fill="#fff"/><rect x="13" y="3" width="1" height="1" fill="#fff"/><rect x="14" y="2" width="1" height="1" fill="#fff"/><rect x="15" y="3" width="1" height="1" fill="#fff"/><rect x="16" y="2" width="1" height="1" fill="#fff"/><rect x="17" y="3" width="1" height="1" fill="#fff"/><rect x="18" y="2" width="1" height="1" fill="#fff"/><rect x="19" y="3" width="1" height="1" fill="#fff"/><rect x="20" y="2" width="1" height="1" fill="#fff"/><rect x="21" y="3" width="1" height="1" fill="#fff"/><rect x="22" y="2" width="1" height="1" fill="#fff"/><rect x="2" y="10" width="1" height="1" fill="#fff"/><rect x="3" y="11" width="1" height="1" fill="#fff"/><rect x="4" y="10" width="1" height="1" fill="#fff"/><rect x="5" y="11" width="1" height="1" fill="#fff"/><rect x="6" y="10" width="1" height="1" fill="#fff"/><rect x="7" y="11" width="1" height="1" fill="#fff"/><rect x="8" y="10" width="1" height="1" fill="#fff"/><rect x="9" y="11" width="1" height="1" fill="#fff"/><rect x="10" y="10" width="1" height="1" fill="#fff"/><rect x="11" y="11" width="1" height="1" fill="#fff"/><rect x="12" y="10" width="1" height="1" fill="#fff"/><rect x="13" y="11" width="1" height="1" fill="#fff"/><rect x="14" y="10" width="1" height="1" fill="#fff"/><rect x="15" y="11" width="1" height="1" fill="#fff"/><rect x="16" y="10" width="1" height="1" fill="#fff"/><rect x="17" y="11" width="1" height="1" fill="#fff"/><rect x="18" y="10" width="1" height="1" fill="#fff"/><rect x="19" y="11" width="1" height="1" fill="#fff"/><rect x="20" y="10" width="1" height="1" fill="#fff"/><rect x="21" y="11" width="1" height="1" fill="#fff"/><rect x="22" y="10" width="1" height="1" fill="#fff"/><rect x="2" y="18" width="1" height="1" fill="#fff"/><rect x="3" y="19" width="1" height="1" fill="#fff"/><rect x="4" y="18" width="1" height="1" fill="#fff"/><rect x="5" y="19" width="1" height="1" fill="#fff"/><rect x="6" y="18" width="1" height="1" fill="#fff"/><rect x="7" y="19" width="1" height="1" fill="#fff"/><rect x="8" y="18" width="1" height="1" fill="#fff"/><rect x="9" y="19" width="1" height="1" fill="#fff"/><rect x="10" y="18" width="1" height="1" fill="#fff"/><rect x="11" y="19" width="1" height="1" fill="#fff"/><rect x="12" y="18" width="1" height="1" fill="#fff"/><rect x="13" y="19" width="1" height="1" fill="#fff"/><rect x="14" y="18" width="1" height="1" fill="#fff"/><rect x="15" y="19" width="1" height="1" fill="#fff"/><rect x="16" y="18" width="1" height="1" fill="#fff"/><rect x="17" y="19" width="1" height="1" fill="#fff"/><rect x="18" y="18" width="1" height="1" fill="#fff"/><rect x="19" y="19" width="1" height="1" fill="#fff"/><rect x="20" y="18" width="1" height="1" fill="#fff"/><rect x="21" y="19" width="1" height="1" fill="#fff"/><rect x="22" y="18" width="1" height="1" fill="#fff"/><rect x="3" y="7" width="1" height="1" fill="#fff"/><rect x="4" y="6" width="1" height="1" fill="#fff"/><rect x="5" y="7" width="1" height="1" fill="#fff"/><rect x="6" y="6" width="1" height="1" fill="#fff"/><rect x="7" y="7" width="1" height="1" fill="#fff"/><rect x="8" y="6" width="1" height="1" fill="#fff"/><rect x="9" y="7" width="1" height="1" fill="#fff"/><rect x="13" y="7" width="1" height="1" fill="#fff"/><rect x="14" y="6" width="1" height="1" fill="#fff"/><rect x="15" y="7" width="1" height="1" fill="#fff"/><rect x="16" y="6" width="1" height="1" fill="#fff"/><rect x="17" y="7" width="1" height="1" fill="#fff"/><rect x="18" y="6" width="1" height="1" fill="#fff"/><rect x="3" y="15" width="1" height="1" fill="#fff"/><rect x="4" y="14" width="1" height="1" fill="#fff"/><rect x="5" y="15" width="1" height="1" fill="#fff"/><rect x="6" y="14" width="1" height="1" fill="#fff"/><rect x="7" y="15" width="1" height="1" fill="#fff"/><rect x="8" y="14" width="1" height="1" fill="#fff"/><rect x="9" y="15" width="1" height="1" fill="#fff"/><rect x="13" y="15" width="1" height="1" fill="#fff"/><rect x="14" y="14" width="1" height="1" fill="#fff"/><rect x="15" y="15" width="1" height="1" fill="#fff"/><rect x="16" y="14" width="1" height="1" fill="#fff"/><rect x="17" y="15" width="1" height="1" fill="#fff"/><rect x="18" y="14" width="1" height="1" fill="#fff"/><rect x="4" y="2" width="1" height="1" fill="#00ffff"/><rect x="5" y="3" width="1" height="1" fill="#00ffff"/><rect x="6" y="2" width="1" height="1" fill="#00ffff"/><rect x="7" y="3" width="1" height="1" fill="#00ffff"/><rect x="8" y="2" width="1" height="1" fill="#00ffff"/><rect x="9" y="3" width="1" height="1" fill="#00ffff"/><rect x="10" y="2" width="1" height="1" fill="#00ffff"/><rect x="14" y="2" width="1" height="1" fill="#00ffff"/><rect x="15" y="3" width="1" height="1" fill="#00ffff"/><rect x="16" y="2" width="1" height="1" fill="#00ffff"/><rect x="17" y="3" width="1" height="1" fill="#00ffff"/><rect x="18" y="2" width="1" height="1" fill="#00ffff"/><rect x="19" y="3" width="1" height="1" fill="#00ffff"/><rect x="9" y="11" width="1" height="1" fill="#00ffff"/><rect x="10" y="10" width="1" height="1" fill="#00ffff"/><rect x="11" y="11" width="1" height="1" fill="#00ffff"/><rect x="12" y="10" width="1" height="1" fill="#00ffff"/><rect x="13" y="11" width="1" height="1" fill="#00ffff"/><rect x="16" y="10" width="1" height="1" fill="#00ffff"/><rect x="17" y="11" width="1" height="1" fill="#00ffff"/><rect x="18" y="10" width="1" height="1" fill="#00ffff"/><rect x="19" y="11" width="1" height="1" fill="#00ffff"/><rect x="4" y="18" width="1" height="1" fill="#00ffff"/><rect x="5" y="19" width="1" height="1" fill="#00ffff"/><rect x="6" y="18" width="1" height="1" fill="#00ffff"/><rect x="7" y="19" width="1" height="1" fill="#00ffff"/><rect x="8" y="18" width="1" height="1" fill="#00ffff"/><rect x="9" y="19" width="1" height="1" fill="#00ffff"/><rect x="10" y="18" width="1" height="1" fill="#00ffff"/><rect x="14" y="18" width="1" height="1" fill="#00ffff"/><rect x="15" y="19" width="1" height="1" fill="#00ffff"/><rect x="16" y="18" width="1" height="1" fill="#00ffff"/><rect x="17" y="19" width="1" height="1" fill="#00ffff"/><rect x="18" y="18" width="1" height="1" fill="#00ffff"/><rect x="19" y="19" width="1" height="1" fill="#00ffff"/><rect x="2" y="4" width="1" height="1" fill="#00ffff"/><rect x="2" y="6" width="1" height="1" fill="#00ffff"/><rect x="2" y="8" width="1" height="1" fill="#00ffff"/><rect x="2" y="10" width="1" height="1" fill="#00ffff"/><rect x="2" y="12" width="1" height="1" fill="#00ffff"/><rect x="2" y="14" width="1" height="1" fill="#00ffff"/><rect x="2" y="16" width="1" height="1" fill="#00ffff"/><rect x="22" y="4" width="1" height="1" fill="#00ffff"/><rect x="22" y="6" width="1" height="1" fill="#00ffff"/><rect x="22" y="8" width="1" height="1" fill="#00ffff"/><rect x="22" y="10" width="1" height="1" fill="#00ffff"/><rect x="22" y="12" width="1" height="1" fill="#00ffff"/><rect x="22" y="14" width="1" height="1" fill="#00ffff"/><rect x="22" y="16" width="1" height="1" fill="#00ffff"/><rect x="21" y="7" width="1" height="1" fill="#fff"/><rect x="21" y="15" width="1" height="1" fill="#fff"/><rect x="3" y="7" width="1" height="1" fill="#fff"/><rect x="3" y="15" width="1" height="1" fill="#fff"/><rect x="11" y="4" width="1" height="1" fill="#00ffff"/><rect x="10" y="5" width="1" height="1" fill="#00ffff"/><rect x="9" y="6" width="1" height="1" fill="#00ffff"/><rect x="8" y="7" width="1" height="1" fill="#00ffff"/><rect x="7" y="8" width="1" height="1" fill="#00ffff"/><rect x="6" y="9" width="1" height="1" fill="#00ffff"/><rect x="10" y="12" width="1" height="1" fill="#00ffff"/><rect x="9" y="13" width="1" height="1" fill="#00ffff"/><rect x="8" y="14" width="1" height="1" fill="#00ffff"/><rect x="7" y="15" width="1" height="1" fill="#00ffff"/><rect x="6" y="16" width="1" height="1" fill="#00ffff"/><rect x="5" y="17" width="1" height="1" fill="#00ffff"/></svg>
<div style="left:46px;top:591px;width:67px;height:16px;background:#0a246a;outline:1px dotted #e8d080;outline-offset:-1px"></div>
<span class="t" style='left:46.96px;top:217px;font:bold 12px "DejaVu Sans Condensed", "Liberation Sans", sans-serif;color:#000;letter-spacing:0.011px;'>Receiption</span>
<span class="t" style='left:58.56px;top:292px;font:bold 12px "DejaVu Sans Condensed", "Liberation Sans", sans-serif;color:#000;letter-spacing:0.214px;'>Doctor</span>
<span class="t" style='left:68.26px;top:367px;font:bold 12px "DejaVu Sans Condensed", "Liberation Sans", sans-serif;color:#000;letter-spacing:0.602px;'>Lab</span>
<span class="t" style='left:56.70px;top:442px;font:bold 12px "DejaVu Sans Condensed", "Liberation Sans", sans-serif;color:#000;letter-spacing:-0.368px;'>General</span>
<span class="t" style='left:65.46px;top:517px;font:bold 12px "DejaVu Sans Condensed", "Liberation Sans", sans-serif;color:#000;letter-spacing:-0.515px;'>Daily</span>
<span class="t" style='left:55.16px;top:531px;font:bold 12px "DejaVu Sans Condensed", "Liberation Sans", sans-serif;color:#000;letter-spacing:0.282px;'>Reports</span>
<span class="t" style='left:48.31px;top:592px;font:bold 12px "DejaVu Sans Condensed", "Liberation Sans", sans-serif;color:#fff;letter-spacing:-0.007px;'>Dash Bord</span>
</div>
<div id="main" style="left:0;top:0">
<div class="bx" style="left:244px;top:186px;width:1108px;height:485px"></div>
<div class="bx" style="left:246px;top:229px;width:545px;height:434px"></div>
<div class="hl" style="left:246px;top:265px;width:545px"></div>
<div class="hl" style="left:246px;top:587px;width:545px"></div>
<div class="bx" style="left:801px;top:197px;width:260px;height:198px"></div>
<div class="bx" style="left:1072px;top:197px;width:260px;height:198px"></div>
<div class="bx" style="left:801px;top:411px;width:260px;height:241px"></div>
<div class="bx" style="left:1072px;top:411px;width:260px;height:241px"></div>
<span class="t" style='left:253.03px;top:192px;font:italic bold 18.67px "DejaVu Sans", "Liberation Sans", sans-serif;color:#0a246a;letter-spacing:0.534px;'>Today's Information</span>
<span class="t" style='left:255.11px;top:235px;font:italic bold 12px "DejaVu Sans", "Liberation Sans", sans-serif;color:#800000;letter-spacing:-0.298px;'>Registration Information</span>
<span class="t" style='left:809.21px;top:203px;font:italic bold 12px "DejaVu Sans", "Liberation Sans", sans-serif;color:#800000;letter-spacing:-0.301px;'>Lab Information</span>
<span class="t" style='left:1080.29px;top:203px;font:italic bold 12px "DejaVu Sans", "Liberation Sans", sans-serif;color:#800000;letter-spacing:-0.286px;'>Services Information</span>
<span class="t" style='left:802.02px;top:417px;font:italic bold 12px "DejaVu Sans", "Liberation Sans", sans-serif;color:#800000;letter-spacing:-0.284px;'>Tests Done Information</span>
<span class="t" style='left:1080.41px;top:417px;font:italic bold 12px "DejaVu Sans", "Liberation Sans", sans-serif;color:#800000;letter-spacing:-0.350px;'>Pharmacy Information</span>
<span class="t" style='left:247.01px;top:609px;font:bold 11px "DejaVu Sans Condensed", "Liberation Sans", sans-serif;color:#000;letter-spacing:0.173px;word-spacing:-1.0px;'>Total Registrations &nbsp;:</span>
<span class="t" style='left:247.01px;top:641px;font:bold 11px "DejaVu Sans Condensed", "Liberation Sans", sans-serif;color:#000;letter-spacing:0.161px;word-spacing:-1.0px;'>Total Appointments :</span>
<span class="t" style='left:558.13px;top:588px;font:bold 11px "DejaVu Sans Condensed", "Liberation Sans", sans-serif;color:#000;letter-spacing:-0.942px;'>OP</span>
<span class="t" style='left:625.68px;top:588px;font:bold 11px "DejaVu Sans Condensed", "Liberation Sans", sans-serif;color:#000;letter-spacing:1.235px;'>IP</span>
<span class="t" style='left:693.78px;top:588px;font:bold 11px "DejaVu Sans Condensed", "Liberation Sans", sans-serif;color:#000;letter-spacing:-0.417px;'>New</span>
<span class="t" style='left:808.98px;top:245px;font:bold 11px "DejaVu Sans Condensed", "Liberation Sans", sans-serif;color:#000;letter-spacing:0.084px;word-spacing:-1.0px;'>Patinets Cnt. :</span>
<span class="t" style='left:808.98px;top:278px;font:bold 11px "DejaVu Sans Condensed", "Liberation Sans", sans-serif;color:#000;letter-spacing:-0.146px;word-spacing:-1.0px;'>Bills Cnt. :</span>
<span class="t" style='left:809.21px;top:316px;font:bold 11px "DejaVu Sans Condensed", "Liberation Sans", sans-serif;color:#000;letter-spacing:0.261px;word-spacing:-1.0px;'>Tests Written :</span>
<span class="t" style='left:808.98px;top:355px;font:bold 11px "DejaVu Sans Condensed", "Liberation Sans", sans-serif;color:#000;letter-spacing:0.208px;word-spacing:-1.0px;'>Lab Amount :</span>
<span class="t" style='left:1079.78px;top:245px;font:bold 11px "DejaVu Sans Condensed", "Liberation Sans", sans-serif;color:#000;letter-spacing:0.084px;word-spacing:-1.0px;'>Patinets Cnt. :</span>
<span class="t" style='left:1079.78px;top:278px;font:bold 11px "DejaVu Sans Condensed", "Liberation Sans", sans-serif;color:#000;letter-spacing:-0.146px;word-spacing:-1.0px;'>Bills Cnt. :</span>
<span class="t" style='left:1079.77px;top:316px;font:bold 11px "DejaVu Sans Condensed", "Liberation Sans", sans-serif;color:#000;letter-spacing:0.093px;word-spacing:-1.0px;'>Services Cnt. :</span>
<span class="t" style='left:1079.78px;top:355px;font:bold 11px "DejaVu Sans Condensed", "Liberation Sans", sans-serif;color:#000;letter-spacing:0.208px;word-spacing:-1.0px;'>Lab Amount :</span>
<span class="t" style='left:808.67px;top:469px;font:bold 11px "DejaVu Sans Condensed", "Liberation Sans", sans-serif;color:#000;letter-spacing:0.085px;word-spacing:-1.0px;'>Sample Collections :</span>
<span class="t" style='left:808.68px;top:508px;font:bold 11px "DejaVu Sans Condensed", "Liberation Sans", sans-serif;color:#000;letter-spacing:0.141px;word-spacing:-1.0px;'>Lab Results :</span>
<span class="t" style='left:808.68px;top:547px;font:bold 11px "DejaVu Sans Condensed", "Liberation Sans", sans-serif;color:#000;letter-spacing:0.070px;word-spacing:-1.0px;'>Pending Lab Results :</span>
<span class="t" style='left:1079.87px;top:469px;font:bold 11px "DejaVu Sans Condensed", "Liberation Sans", sans-serif;color:#000;letter-spacing:-0.044px;word-spacing:-1.0px;'>Sale Bills Cnt. :</span>
<span class="t" style='left:1079.88px;top:508px;font:bold 11px "DejaVu Sans Condensed", "Liberation Sans", sans-serif;color:#000;letter-spacing:0.242px;word-spacing:-1.0px;'>Pharmacy Amt. :</span>
<span class="t" style='left:450.16px;top:609px;font:12px "DejaVu Sans Condensed", "Liberation Sans", sans-serif;color:#ff00ff;'>6</span>
<span class="t" style='left:450.13px;top:641px;font:12px "DejaVu Sans Condensed", "Liberation Sans", sans-serif;color:#ff00ff;'>5</span>
<span class="t" style='left:557.82px;top:609px;font:12px "DejaVu Sans Condensed", "Liberation Sans", sans-serif;color:#ff00ff;'>1</span>
<span class="t" style='left:626.13px;top:609px;font:12px "DejaVu Sans Condensed", "Liberation Sans", sans-serif;color:#ff00ff;'>5</span>
<span class="t" style='left:708.46px;top:609px;font:12px "DejaVu Sans Condensed", "Liberation Sans", sans-serif;color:#ff00ff;'>6</span>
<span class="t" style='left:977.52px;top:243px;font:12px "DejaVu Sans Condensed", "Liberation Sans", sans-serif;color:#ff00ff;'>1</span>
<span class="t" style='left:977.52px;top:277px;font:12px "DejaVu Sans Condensed", "Liberation Sans", sans-serif;color:#ff00ff;'>1</span>
<span class="t" style='left:978.56px;top:314px;font:12px "DejaVu Sans Condensed", "Liberation Sans", sans-serif;color:#ff00ff;letter-spacing:-0.398px;'>20</span>
<span class="t" style='left:977.42px;top:353px;font:12px "DejaVu Sans Condensed", "Liberation Sans", sans-serif;color:#ff00ff;letter-spacing:0.320px;'>12670</span>
<span class="t" style='left:1249.07px;top:245px;font:12px "DejaVu Sans Condensed", "Liberation Sans", sans-serif;color:#ff00ff;'>0</span>
<span class="t" style='left:1249.07px;top:277px;font:12px "DejaVu Sans Condensed", "Liberation Sans", sans-serif;color:#ff00ff;'>0</span>
<span class="t" style='left:1249.07px;top:316px;font:12px "DejaVu Sans Condensed", "Liberation Sans", sans-serif;color:#ff00ff;'>0</span>
<span class="t" style='left:1249.07px;top:355px;font:12px "DejaVu Sans Condensed", "Liberation Sans", sans-serif;color:#ff00ff;'>0</span>
<span class="t" style='left:1018.16px;top:469px;font:12px "DejaVu Sans Condensed", "Liberation Sans", sans-serif;color:#ff00ff;letter-spacing:-0.398px;'>20</span>
<span class="t" style='left:1018.13px;top:508px;font:12px "DejaVu Sans Condensed", "Liberation Sans", sans-serif;color:#ff00ff;'>5</span>
<span class="t" style='left:1017.72px;top:547px;font:12px "DejaVu Sans Condensed", "Liberation Sans", sans-serif;color:#ff00ff;letter-spacing:0.135px;'>11</span>
<span class="t" style='left:1262.27px;top:469px;font:12px "DejaVu Sans Condensed", "Liberation Sans", sans-serif;color:#ff00ff;'>0</span>
<span class="t" style='left:1262.27px;top:508px;font:12px "DejaVu Sans Condensed", "Liberation Sans", sans-serif;color:#ff00ff;'>0</span>
<div id="grid" style="left:0;top:0">
<div class="hc" style="left:247px;width:237px"></div>
<div class="hc" style="left:485px;width:35px"></div>
<div class="hc" style="left:521px;width:29px"></div>
<div class="hc" style="left:551px;width:56px"></div>
<div class="hc" style="left:608px;width:28px"></div>
<div class="hc" style="left:637px;width:51px"></div>
<div class="hc" style="left:689px;width:39px"></div>
<div class="hc" style="left:729px;width:58px"></div>
<div class="hl" style="left:247px;top:282px;width:541px"></div>
<div class="hl" style="left:247px;top:299px;width:541px"></div>
<div class="hl" style="left:247px;top:316px;width:541px"></div>
<div class="hl" style="left:247px;top:333px;width:541px"></div>
<div class="hl" style="left:247px;top:350px;width:541px"></div>
<div class="hl" style="left:247px;top:367px;width:541px"></div>
<div class="vl" style="left:484px;top:265px;height:103px"></div>
<div class="vl" style="left:520px;top:265px;height:103px"></div>
<div class="vl" style="left:550px;top:265px;height:103px"></div>
<div class="vl" style="left:607px;top:265px;height:103px"></div>
<div class="vl" style="left:636px;top:265px;height:103px"></div>
<div class="vl" style="left:688px;top:265px;height:103px"></div>
<div class="vl" style="left:728px;top:265px;height:103px"></div>
<div class="vl" style="left:787px;top:265px;height:103px"></div>
<span class="t" style='left:250.24px;top:268px;font:12px "DejaVu Sans Condensed", "Liberation Sans", sans-serif;color:#fff;letter-spacing:0.009px;'>Department</span>
<span class="t" style='left:488.32px;top:268px;font:12px "DejaVu Sans Condensed", "Liberation Sans", sans-serif;color:#fff;letter-spacing:0.446px;'>App.</span>
<span class="t" style='left:524.29px;top:268px;font:12px "DejaVu Sans Condensed", "Liberation Sans", sans-serif;color:#fff;letter-spacing:-0.169px;'>OP</span>
<span class="t" style='left:554.29px;top:268px;font:12px "DejaVu Sans Condensed", "Liberation Sans", sans-serif;color:#fff;letter-spacing:0.409px;'>OP Amt</span>
<span class="t" style='left:611.24px;top:268px;font:12px "DejaVu Sans Condensed", "Liberation Sans", sans-serif;color:#fff;letter-spacing:0.648px;'>IP</span>
<span class="t" style='left:640.24px;top:268px;font:12px "DejaVu Sans Condensed", "Liberation Sans", sans-serif;color:#fff;letter-spacing:0.573px;'>IP Amt.</span>
<span class="t" style='left:692.24px;top:268px;font:12px "DejaVu Sans Condensed", "Liberation Sans", sans-serif;color:#fff;letter-spacing:-0.372px;'>Revisit</span>
<span class="t" style='left:732.32px;top:268px;font:12px "DejaVu Sans Condensed", "Liberation Sans", sans-serif;color:#fff;letter-spacing:0.122px;'>Visit Amt.</span>
<span class="t" style='left:249.94px;top:285px;font:12px "DejaVu Sans Condensed", "Liberation Sans", sans-serif;color:#000;letter-spacing:-0.067px;'>LAB</span>
<span class="t" style='left:510.97px;top:285px;font:12px "DejaVu Sans Condensed", "Liberation Sans", sans-serif;color:#000;'>5</span>
<span class="t" style='left:249.99px;top:302px;font:12px "DejaVu Sans Condensed", "Liberation Sans", sans-serif;color:#000;letter-spacing:0.292px;'>Ortho</span>
<span class="t" style='left:540.93px;top:302px;font:12px "DejaVu Sans Condensed", "Liberation Sans", sans-serif;color:#000;'>0</span>
<span class="t" style='left:597.93px;top:302px;font:12px "DejaVu Sans Condensed", "Liberation Sans", sans-serif;color:#000;'>0</span>
<span class="t" style='left:626.98px;top:302px;font:12px "DejaVu Sans Condensed", "Liberation Sans", sans-serif;color:#000;'>2</span>
<span class="t" style='left:664.97px;top:302px;font:12px "DejaVu Sans Condensed", "Liberation Sans", sans-serif;color:#000;'>100</span>
<span class="t" style='left:718.93px;top:302px;font:12px "DejaVu Sans Condensed", "Liberation Sans", sans-serif;color:#000;'>0</span>
<span class="t" style='left:777.93px;top:302px;font:12px "DejaVu Sans Condensed", "Liberation Sans", sans-serif;color:#000;'>0</span>
<span class="t" style='left:249.99px;top:319px;font:12px "DejaVu Sans Condensed", "Liberation Sans", sans-serif;color:#000;letter-spacing:0.099px;'>GENERAL SURGERY</span>
<span class="t" style='left:540.93px;top:319px;font:12px "DejaVu Sans Condensed", "Liberation Sans", sans-serif;color:#000;'>0</span>
<span class="t" style='left:597.93px;top:319px;font:12px "DejaVu Sans Condensed", "Liberation Sans", sans-serif;color:#000;'>0</span>
<span class="t" style='left:627.57px;top:319px;font:12px "DejaVu Sans Condensed", "Liberation Sans", sans-serif;color:#000;'>1</span>
<span class="t" style='left:664.97px;top:319px;font:12px "DejaVu Sans Condensed", "Liberation Sans", sans-serif;color:#000;'>150</span>
<span class="t" style='left:718.93px;top:319px;font:12px "DejaVu Sans Condensed", "Liberation Sans", sans-serif;color:#000;'>0</span>
<span class="t" style='left:777.93px;top:319px;font:12px "DejaVu Sans Condensed", "Liberation Sans", sans-serif;color:#000;'>0</span>
<span class="t" style='left:249.99px;top:336px;font:12px "DejaVu Sans Condensed", "Liberation Sans", sans-serif;color:#000;letter-spacing:0.251px;'>CARDIOLOGIST</span>
<span class="t" style='left:541.57px;top:336px;font:12px "DejaVu Sans Condensed", "Liberation Sans", sans-serif;color:#000;'>1</span>
<span class="t" style='left:583.97px;top:336px;font:12px "DejaVu Sans Condensed", "Liberation Sans", sans-serif;color:#000;'>200</span>
<span class="t" style='left:627.57px;top:336px;font:12px "DejaVu Sans Condensed", "Liberation Sans", sans-serif;color:#000;'>1</span>
<span class="t" style='left:671.97px;top:336px;font:12px "DejaVu Sans Condensed", "Liberation Sans", sans-serif;color:#000;'>50</span>
<span class="t" style='left:718.93px;top:336px;font:12px "DejaVu Sans Condensed", "Liberation Sans", sans-serif;color:#000;'>0</span>
<span class="t" style='left:777.93px;top:336px;font:12px "DejaVu Sans Condensed", "Liberation Sans", sans-serif;color:#000;'>0</span>
<span class="t" style='left:249.94px;top:353px;font:12px "DejaVu Sans Condensed", "Liberation Sans", sans-serif;color:#000;letter-spacing:0.207px;'>Duty doctor</span>
<span class="t" style='left:540.93px;top:353px;font:12px "DejaVu Sans Condensed", "Liberation Sans", sans-serif;color:#000;'>0</span>
<span class="t" style='left:597.93px;top:353px;font:12px "DejaVu Sans Condensed", "Liberation Sans", sans-serif;color:#000;'>0</span>
<span class="t" style='left:627.57px;top:353px;font:12px "DejaVu Sans Condensed", "Liberation Sans", sans-serif;color:#000;'>1</span>
<span class="t" style='left:664.97px;top:353px;font:12px "DejaVu Sans Condensed", "Liberation Sans", sans-serif;color:#000;'>150</span>
<span class="t" style='left:718.93px;top:353px;font:12px "DejaVu Sans Condensed", "Liberation Sans", sans-serif;color:#000;'>0</span>
<span class="t" style='left:777.93px;top:353px;font:12px "DejaVu Sans Condensed", "Liberation Sans", sans-serif;color:#000;'>0</span>
</div></div>
</body></html>
